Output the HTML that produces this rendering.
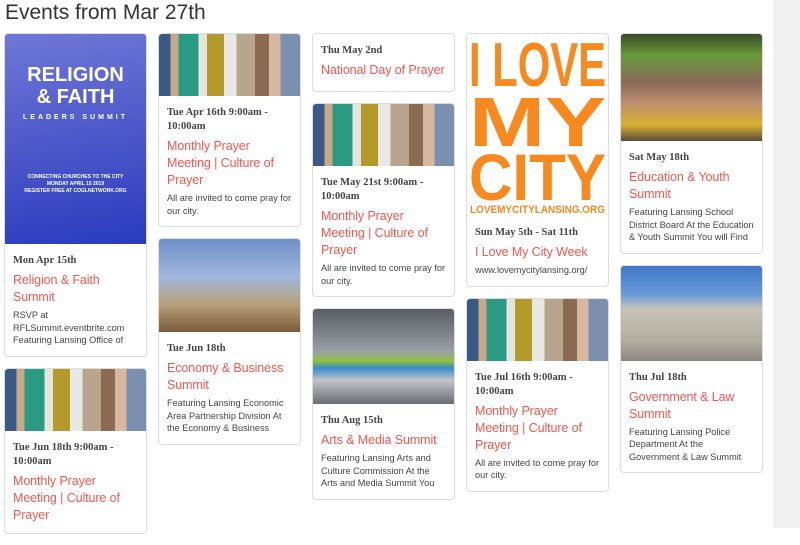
<!DOCTYPE html>
<html><head><meta charset="utf-8"><style>
*{margin:0;padding:0;box-sizing:border-box}
body{width:800px;height:528px;overflow:hidden;background:#fff;font-family:"Liberation Sans",sans-serif;position:relative}
h1{position:absolute;left:5px;top:1px;font-size:21px;font-weight:normal;color:#333}
.col{position:absolute;top:33px;width:143px}
.card{border:1px solid #ddd;border-radius:4px;background:#fff;margin-bottom:11px;overflow:hidden}
.img{width:100%;overflow:hidden}
.b{padding:8px 6px 9px 8px}
.d{font-family:"Liberation Serif",serif;font-weight:bold;font-size:10.5px;color:#444;line-height:14px;margin-top:2px}
.t{font-size:12.5px;color:#f5564e;line-height:17px;margin-top:4px;letter-spacing:-0.1px}
.x{font-size:9.2px;color:#444;line-height:12.5px;margin-top:3px;white-space:nowrap}
.pray{height:62px;background:linear-gradient(90deg,#3a5a86 0 8%,#c9a88a 8% 14%,#2b9a83 14% 28%,#e5e5e0 28% 34%,#b49a2a 34% 46%,#e8e8e6 46% 55%,#b7a58e 55% 68%,#8a6a50 68% 78%,#d8b7a0 78% 86%,#7b8fae 86%)}
.scroll{position:absolute;left:773px;top:0;width:27px;height:528px;background:#f1f1f1}
</style></head><body>
<h1>Events from Mar 27th</h1>
<div class="col" style="left:4px">
 <div class="card"><div class="img" style="height:210px;background:linear-gradient(170deg,#6f78d6,#4a55c8 55%,#2a3bc0);position:relative;color:#fff;text-align:center;font-weight:bold">
  <div style="padding-top:30px;font-size:20px;line-height:22px">RELIGION<br>&amp; FAITH</div>
  <div style="font-size:7px;letter-spacing:3px;margin-top:6px">LEADERS SUMMIT</div>
  <div style="position:absolute;left:0;right:0;top:140px;font-size:5px;line-height:7px">CONNECTING CHURCHES TO THE CITY<br>MONDAY APRIL 15 2019<br>REGISTER FREE AT COGLNETWORK.ORG</div>
 </div>
 <div class="b"><div class="d">Mon Apr 15th</div><div class="t">Religion &amp; Faith Summit</div><div class="x">RSVP at<br>RFLSummit.eventbrite.com<br>Featuring Lansing Office of</div></div></div>
 <div class="card"><div class="img pray"></div>
 <div class="b"><div class="d">Tue Jun 18th 9:00am - 10:00am</div><div class="t">Monthly Prayer Meeting | Culture of Prayer</div></div></div>
</div>
<div class="col" style="left:158px">
 <div class="card"><div class="img pray"></div>
 <div class="b"><div class="d">Tue Apr 16th 9:00am - 10:00am</div><div class="t">Monthly Prayer Meeting | Culture of Prayer</div><div class="x">All are invited to come pray for<br>our city.</div></div></div>
 <div class="card"><div class="img" style="height:93px;background:linear-gradient(180deg,#6f8fc8,#9fb7dd 40%,#b8a07a 70%,#7a5a3a)"></div>
 <div class="b"><div class="d">Tue Jun 18th</div><div class="t">Economy &amp; Business Summit</div><div class="x">Featuring Lansing Economic<br>Area Partnership Division At<br>the Economy &amp; Business</div></div></div>
</div>
<div class="col" style="left:312px">
 <div class="card"><div class="b" style="padding-bottom:12px"><div class="d">Thu May 2nd</div><div class="t">National Day of Prayer</div></div></div>
 <div class="card"><div class="img pray"></div>
 <div class="b"><div class="d">Tue May 21st 9:00am - 10:00am</div><div class="t">Monthly Prayer Meeting | Culture of Prayer</div><div class="x">All are invited to come pray for<br>our city.</div></div></div>
 <div class="card"><div class="img" style="height:95px;background:linear-gradient(180deg,#5a5e64,#9aa0a6 45%,#8fc23a 55%,#3a8ad0 62%,#c0c4c8 75%,#6a6e72)"></div>
 <div class="b"><div class="d">Thu Aug 15th</div><div class="t">Arts &amp; Media Summit</div><div class="x">Featuring Lansing Arts and<br>Culture Commission At the<br>Arts and Media Summit You</div></div></div>
</div>
<div class="col" style="left:466px">
 <div class="card"><div class="img" style="height:182px">
  <svg width="141" height="182" viewBox="0 0 141 182" font-family="Liberation Sans, sans-serif" font-weight="bold" fill="#f7891f">
   <text x="2" y="52" font-size="62" textLength="137" lengthAdjust="spacingAndGlyphs">I LOVE</text>
   <text x="2" y="112" font-size="70" textLength="137" lengthAdjust="spacingAndGlyphs">MY</text>
   <text x="2" y="166" font-size="66" textLength="137" lengthAdjust="spacingAndGlyphs">CITY</text>
   <text x="3" y="179" font-size="11" textLength="135" lengthAdjust="spacingAndGlyphs">LOVEMYCITYLANSING.ORG</text>
  </svg>
 </div>
 <div class="b"><div class="d">Sun May 5th - Sat 11th</div><div class="t">I Love My City Week</div><div class="x">www.lovemycitylansing.org/</div></div></div>
 <div class="card"><div class="img pray"></div>
 <div class="b"><div class="d">Tue Jul 16th 9:00am - 10:00am</div><div class="t">Monthly Prayer Meeting | Culture of Prayer</div><div class="x">All are invited to come pray for<br>our city.</div></div></div>
</div>
<div class="col" style="left:620px">
 <div class="card"><div class="img" style="height:107px;background:linear-gradient(180deg,#3a4a2a,#6a9a3a 20%,#8a6a5a 45%,#c09070 65%,#d8b030 85%,#5a4a3a)"></div>
 <div class="b"><div class="d">Sat May 18th</div><div class="t">Education &amp; Youth Summit</div><div class="x">Featuring Lansing School<br>District Board At the Education<br>&amp; Youth Summit You will Find</div></div></div>
 <div class="card"><div class="img" style="height:95px;background:linear-gradient(180deg,#3f78c8,#6a9ad8 30%,#c8c4b8 45%,#b0aca0 80%,#8a8680)"></div>
 <div class="b"><div class="d">Thu Jul 18th</div><div class="t">Government &amp; Law Summit</div><div class="x">Featuring Lansing Police<br>Department At the<br>Government &amp; Law Summit</div></div></div>
</div>
<div class="scroll"></div>
</body></html>
